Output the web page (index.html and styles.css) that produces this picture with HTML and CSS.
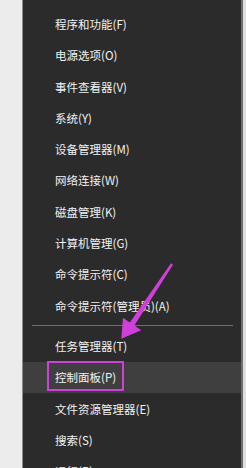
FILE: index.html
```html
<!DOCTYPE html>
<html lang="zh-CN">
<head>
<meta charset="utf-8">
<link rel="stylesheet" href="styles.css">
</head>
<body>
<div class="screen">
  <div class="desk-left"></div>
  <div class="menu">
    <div class="item">程序和功能(F)</div>
    <div class="item">电源选项(O)</div>
    <div class="item">事件查看器(V)</div>
    <div class="item">系统(Y)</div>
    <div class="item">设备管理器(M)</div>
    <div class="item">网络连接(W)</div>
    <div class="item">磁盘管理(K)</div>
    <div class="item">计算机管理(G)</div>
    <div class="item">命令提示符(C)</div>
    <div class="item">命令提示符(管理员)(A)</div>
    <div class="sep"></div>
    <div class="item">任务管理器(T)</div>
    <div class="item active"><span class="mark"></span>控制面板(P)</div>
    <div class="item">文件资源管理器(E)</div>
    <div class="item">搜索(S)</div>
    <div class="item">运行(R)</div>
  </div>
  <div class="desk-right"></div>
  <svg class="arrow" width="246" height="468" viewBox="0 0 246 468">
    <polygon points="171.0,263.2 173.0,264.8 134.4,325.6 141.2,330.2 121.3,338.8 123.0,317.8 129.8,322.4" fill="#cf3fd9"/>
  </svg>
</div>
</body>
</html>
```
FILE: styles.css
```css
html, body {
  margin: 0;
  padding: 0;
}
body {
  width: 246px;
  height: 468px;
  overflow: hidden;
  background: #ececec;
  font-family: "Noto Sans CJK SC", "Noto Sans", sans-serif;
}
.screen {
  position: relative;
  display: flex;
  width: 246px;
  height: 468px;
  overflow: hidden;
}
.desk-left {
  width: 22px;
  flex: none;
  background: #ececec;
  border-right: 1px solid #8c8c8c;
}
.menu {
  width: 218px;
  flex: none;
  background: #2b2b2b;
  padding-top: 8.35px;
  box-sizing: border-box;
  border-right: 2px solid #6f6f6f;
  width: 220px;
}
.desk-right {
  flex: 1;
  background: #dedede;
}
.item {
  position: relative;
  height: 31.3px;
  display: flex;
  align-items: center;
  padding-left: 32px;
  color: #f2f2f2;
  font-size: 11.5px;
  white-space: nowrap;
}
.item.active {
  background: #3f3f3f;
}
.mark {
  position: absolute;
  left: 24px;
  top: -1px;
  width: 77px;
  height: 30px;
  box-sizing: border-box;
  border: 2.5px solid #cf3fd9;
}
.sep {
  height: 9px;
  display: flex;
  align-items: center;
  padding: 0 8px 0 9px;
}
.sep::before {
  content: "";
  display: block;
  flex: 1;
  height: 1px;
  background: #6e6e6e;
}
.arrow {
  position: absolute;
  left: 0;
  top: 0;
  pointer-events: none;
}
```
